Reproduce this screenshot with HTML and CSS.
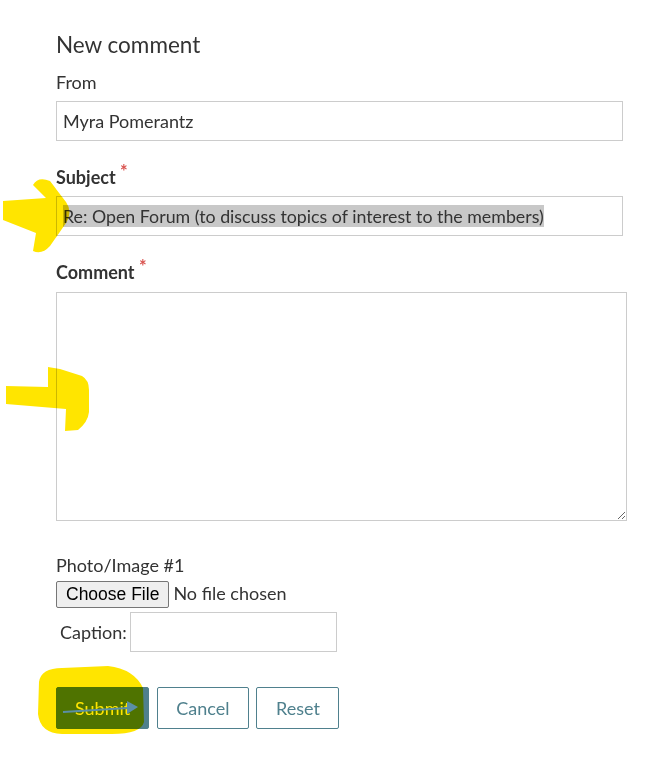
FILE: index.html
```html
<!DOCTYPE html>
<html lang="en">
<head>
<meta charset="UTF-8">
<meta name="viewport" content="width=device-width, initial-scale=1.0">
<title>New comment</title>
<link rel="stylesheet" href="styles.css">
</head>
<body>
<form class="comment-form">
<h2>New comment</h2>

<label class="field-label" for="from">From</label>
<input type="text" id="from" class="text-field" value="Myra Pomerantz">

<label class="field-label required">Subject <span class="star">*</span></label>
<div class="text-field subject"><span class="selected">Re: Open Forum (to discuss topics of interest to the members)</span></div>

<label class="field-label required" for="comment">Comment <span class="star">*</span></label>
<textarea id="comment" class="comment-box"></textarea>

<div class="photo">
<label class="field-label" for="photo1">Photo/Image #1</label>
<input type="file" id="photo1" class="file-input">
<div class="caption-row">
<label for="caption1">Caption:</label>
<input type="text" id="caption1" class="caption-field">
</div>
</div>

<div class="actions">
<button type="button" class="btn btn-primary">Submit</button>
<button type="button" class="btn">Cancel</button>
<button type="reset" class="btn">Reset</button>
</div>
</form>

<!-- highlighter marks drawn over the screenshot -->
<svg class="marker" width="654" height="766" viewBox="0 0 654 766">
<path d="M3,201 L46,198 L33,185 Q38,176 50,181 L66,202 Q73,212 66,223 L50,246 Q42,255 33,251 L36,233 L3,220 Z" />
<path d="M6,386 L48,387 L48,367 L60,369 L82,376 Q89,380 89,390 L89,412 Q88,422 78,430 L65,431 L66,409 L6,404 Z" />
<path d="M39,682 Q41,668 62,668 L108,666 Q134,669 143,688 L144,722 Q141,734 112,734 L62,734 Q40,733 38,714 Z" />
</svg>
<svg class="pen" width="654" height="766" viewBox="0 0 654 766">
<path d="M63,712 L128,708" />
<path d="M127,701 L138,707 L127,714 Z" class="tip" />
</svg>
</body>
</html>
```

FILE: styles.css
```css
body {
margin: 0;
position: relative;
background-color: #fff;
font-family: Lato, "Liberation Sans", sans-serif;
font-size: 18px;
color: #333;
}
.comment-form {
width: 571px;
padding: 31px 0 37px 56px;
}
h2 {
margin: 0 0 13px 0;
font-size: 22.5px;
font-weight: 400;
line-height: 28px;
}
.field-label {
display: block;
line-height: 20px;
margin-bottom: 9px;
}
.required {
font-weight: 700;
}
.star {
color: #d9534f;
font-size: 18px;
line-height: 0;
vertical-align: 6px;
}
.text-field {
display: block;
box-sizing: border-box;
width: 567px;
height: 40px;
margin: 0 0 26px 0;
padding: 0 6px;
border: 1px solid #ccc;
background-color: #fff;
font-family: Lato, "Liberation Sans", sans-serif;
font-size: 18px;
color: #333;
outline: none;
}
.subject {
font-size: 17.8px;
line-height: 38px;
white-space: nowrap;
}
.selected {
background-color: #c8c8c8;
}
.comment-box {
display: block;
box-sizing: border-box;
width: 571px;
height: 229px;
margin: 10px 0 34px 0;
border: 1px solid #ccc;
font-family: Lato, "Liberation Sans", sans-serif;
font-size: 18px;
resize: both;
}
.photo .field-label {
margin-bottom: 6px;
}
.file-input {
display: block;
font-family: Lato, "Liberation Sans", sans-serif;
font-size: 18px;
color: #333;
}
.file-input::file-selector-button {
font-family: "Liberation Sans", Arial, sans-serif;
font-size: 17.5px;
line-height: 19px;
padding: 3px 9px;
margin-right: 4px;
color: #000;
background-color: #efefef;
border: 1px solid #767676;
border-radius: 2px;
}
.caption-row {
display: flex;
align-items: center;
gap: 3px;
margin-top: 4px;
padding-left: 4px;
}
.caption-field {
box-sizing: border-box;
width: 207px;
height: 40px;
border: 1px solid #ccc;
outline: none;
}
.actions {
display: flex;
gap: 7.5px;
margin-top: 35px;
}
.btn {
height: 42px;
padding: 0 18.5px;
background-color: #fff;
color: #4f808d;
border: 1px solid #4f808d;
border-radius: 2px;
font-family: Lato, "Liberation Sans", sans-serif;
font-size: 18px;
cursor: pointer;
}
.btn-primary {
padding: 0 18px;
background-color: #4f808d;
color: #fff;
}
.marker {
position: absolute;
top: 0;
left: 0;
pointer-events: none;
mix-blend-mode: multiply;
fill: #ffe500;
}
.pen {
position: absolute;
top: 0;
left: 0;
pointer-events: none;
fill: none;
stroke: #5b8fa6;
stroke-width: 2;
}
.pen .tip {
fill: #5b8fa6;
stroke: none;
}
```
